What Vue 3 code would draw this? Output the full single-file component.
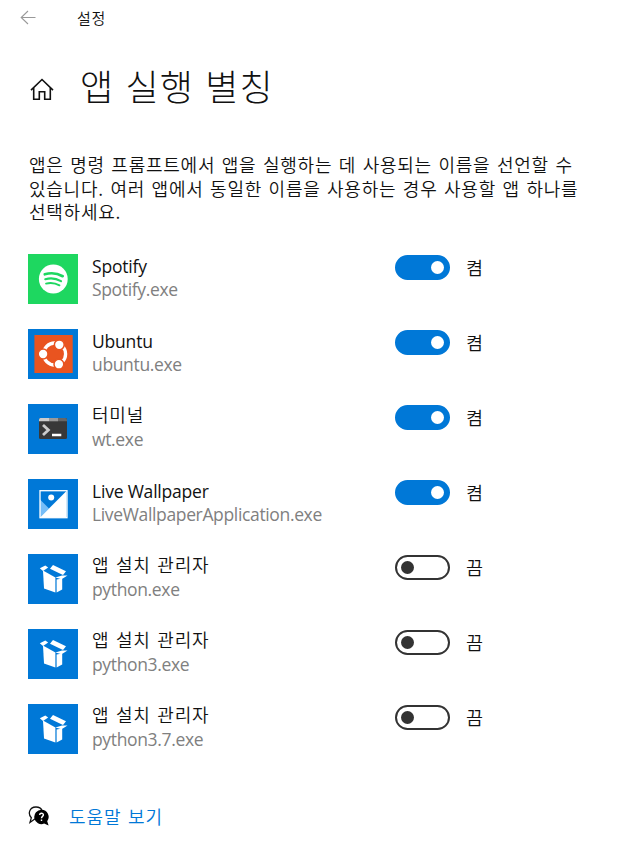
<template>
  <div class="settings">
    <header class="titlebar">
      <svg class="back" width="17" height="15" viewBox="0 0 17 15">
        <path d="M15.5 7.5H1.2M8 1L1.2 7.5L8 14" fill="none" stroke="#999" stroke-width="1.1" />
      </svg>
      <span class="titlebar-text">설정</span>
    </header>

    <div class="heading">
      <svg class="home" width="24" height="24" viewBox="0 0 24 24">
        <path
          d="M1 13.1L12 2.5L23 13.1M3.7 11V22.3H9.3V14.8H14.7V22.3H20.3V11"
          fill="none"
          stroke="#111"
          stroke-width="1.6"
        />
      </svg>
      <h1>앱 실행 별칭</h1>
    </div>

    <p class="description">
      앱은 명령 프롬프트에서 앱을 실행하는 데 사용되는 이름을 선언할 수<br />
      있습니다. 여러 앱에서 동일한 이름을 사용하는 경우 사용할 앱 하나를<br />
      선택하세요.
    </p>

    <ul class="apps">
      <li v-for="app in apps" :key="app.exe" class="app">
        <div class="tile" :class="app.icon">
          <svg v-if="app.icon === 'spotify'" width="50" height="50" viewBox="0 0 50 50">
            <circle cx="25.3" cy="25" r="14.4" fill="#fff" />
            <g fill="none" stroke="#1ed760" stroke-linecap="round">
              <path d="M16.8 20.3C22.3 18.7 29.3 19.2 34.7 22.2" stroke-width="2.7" />
              <path d="M17.3 25.2C22.3 23.8 28.3 24.4 33 27.1" stroke-width="2.2" />
              <path d="M18 29.6C22.3 28.5 27.3 29 31.5 31.4" stroke-width="1.8" />
            </g>
          </svg>
          <svg v-else-if="app.icon === 'ubuntu'" width="50" height="50" viewBox="0 0 50 50">
            <rect x="6.4" y="6" width="38.3" height="38" fill="#e95420" />
            <circle cx="26.6" cy="25" r="11" fill="none" stroke="#fff" stroke-width="3.3" />
            <g fill="#fff" stroke="#e95420" stroke-width="1.5">
              <circle cx="15.1" cy="25" r="4.9" />
              <circle cx="31.3" cy="15.8" r="4.9" />
              <circle cx="30.9" cy="35.2" r="4.9" />
            </g>
          </svg>
          <svg v-else-if="app.icon === 'terminal'" width="50" height="50" viewBox="0 0 50 50">
            <rect x="11" y="14" width="28" height="21" rx="1.5" fill="#383838" />
            <path d="M11 17.3V15.5Q11 14 12.5 14H21V17.3Z" fill="#ccc" />
            <path d="M21 14H30V17.3H21Z" fill="#999" />
            <path d="M30 14H37.5Q39 14 39 15.5V17.3H30Z" fill="#666" />
            <path d="M15 21L20.4 26L15 31" fill="none" stroke="#ccc" stroke-width="2.8" />
            <path d="M24 31H33.3" stroke="#fff" stroke-width="2.5" />
          </svg>
          <svg v-else-if="app.icon === 'wallpaper'" width="50" height="50" viewBox="0 0 50 50">
            <path d="M12 12H38.5L12 38.5Z" fill="#0078d7" />
            <path d="M12 20.5L21 29.5L12 38.5Z" fill="#76bdf8" />
            <path d="M38.5 12V38.5H12Z" fill="#fff" />
            <rect x="12" y="11.7" width="27" height="27" fill="none" stroke="#fff" stroke-width="1.3" />
            <circle cx="23.2" cy="18.5" r="3" fill="#fff" />
          </svg>
          <svg v-else width="50" height="50" viewBox="0 0 50 50">
            <g fill="#fff">
              <path d="M15 16.5L27.4 23.6V38.5L16 34.6Z" />
              <path d="M28.6 25.4L34.2 24.6V35.4L28.6 38.5Z" />
              <path d="M11.8 14.2L17.3 11.6L20.2 13.6L15 17Z" />
              <path d="M25 11L38 17.2L35 21L22 14.8Z" />
              <path d="M27.4 23.6L34 21.6L39.5 21.5L33.5 25.3Z" />
            </g>
          </svg>
        </div>
        <div class="names">
          <div class="name" :class="{ korean: app.korean }">{{ app.name }}</div>
          <div class="exe">{{ app.exe }}</div>
        </div>
        <button class="toggle" :class="{ on: app.on }" @click="app.on = !app.on">
          <span class="knob"></span>
        </button>
        <span class="state">{{ app.on ? '켬' : '끔' }}</span>
      </li>
    </ul>

    <footer class="help">
      <svg width="22" height="20" viewBox="0 0 22 20">
        <path
          d="M7.5 12.5L2 16.5L3.3 11.8C-.2 8.2 1 1.2 7.8 1C11 .9 13.2 2.5 14.2 4.8"
          fill="none"
          stroke="#111"
          stroke-width="1.3"
        />
        <path d="M13.6 3.7A7.2 7.2 0 0 1 19.2 15.2L20.6 19.5L16.1 17.6A7.2 7.2 0 1 1 13.6 3.7Z" fill="#000" />
        <path
          d="M11.6 9C11.7 6.7 15.5 6.8 15.4 8.9C15.3 10.4 13.5 10.4 13.5 12.2M13.5 13.4V14.9"
          fill="none"
          stroke="#fff"
          stroke-width="1.4"
        />
      </svg>
      <a>도움말 보기</a>
    </footer>
  </div>
</template>

<script setup>
import { ref } from 'vue'

const apps = ref([
  { name: 'Spotify', exe: 'Spotify.exe', icon: 'spotify', on: true },
  { name: 'Ubuntu', exe: 'ubuntu.exe', icon: 'ubuntu', on: true },
  { name: '터미널', exe: 'wt.exe', icon: 'terminal', on: true, korean: true },
  { name: 'Live Wallpaper', exe: 'LiveWallpaperApplication.exe', icon: 'wallpaper', on: true },
  { name: '앱 설치 관리자', exe: 'python.exe', icon: 'installer', on: false, korean: true },
  { name: '앱 설치 관리자', exe: 'python3.exe', icon: 'installer', on: false, korean: true },
  { name: '앱 설치 관리자', exe: 'python3.7.exe', icon: 'installer', on: false, korean: true }
])
</script>

<style>
body {
  background: #fff;
}
</style>

<style scoped>
.settings {
  box-sizing: border-box;
  height: 847px;
  overflow: hidden;
  color: #111;
  font-family: 'Noto Sans CJK KR', sans-serif;
  font-weight: 350;
}

.titlebar {
  display: flex;
  align-items: center;
  height: 35px;
  padding-left: 20px;
}

.titlebar-text {
  margin-left: 40px;
  font-size: 15px;
  letter-spacing: 0.8px;
}

.heading {
  display: flex;
  align-items: center;
  height: 60px;
  padding: 20px 0 0 30px;
}

.home {
  margin-top: 7px;
}

h1 {
  margin: 0 0 0 26px;
  font-size: 36px;
  font-weight: 300;
  line-height: 60px;
  letter-spacing: 1.2px;
  word-spacing: 2px;
  white-space: nowrap;
}

.description {
  margin: 38px 0 0 29px;
  font-size: 18px;
  line-height: 23.5px;
  letter-spacing: 0.75px;
  word-spacing: 1.8px;
  white-space: nowrap;
}

.apps {
  margin: 30px 0 0;
  padding: 0 0 0 28px;
  list-style: none;
}

.app {
  display: flex;
  height: 75px;
}

.tile {
  width: 50px;
  height: 50px;
  background: #0078d7;
}

.tile.spotify {
  background: #1ed760;
}

.tile svg {
  display: block;
}

.names {
  width: 303.4px;
  margin-left: 14px;
  font-family: 'Open Sans', 'Noto Sans CJK KR', sans-serif;
  font-size: 17.5px;
  font-weight: 400;
  white-space: nowrap;
}

.name {
  height: 23px;
  line-height: 25px;
  letter-spacing: -0.2px;
}

.name.korean {
  font-family: 'Noto Sans CJK KR', sans-serif;
  font-size: 18px;
  font-weight: 350;
  line-height: 21px;
  letter-spacing: 0.8px;
  word-spacing: 1.8px;
}

.exe {
  line-height: 24px;
  letter-spacing: -0.35px;
  color: #808080;
}

.toggle {
  display: flex;
  align-items: center;
  justify-content: flex-start;
  box-sizing: border-box;
  width: 55px;
  height: 25px;
  margin-top: 1px;
  padding: 0 4px;
  border: 2px solid #333;
  border-radius: 13px;
  background: #fff;
}

.toggle.on {
  justify-content: flex-end;
  border-color: #0078d7;
  background: #0078d7;
}

.knob {
  width: 13px;
  height: 13px;
  border-radius: 50%;
  background: #333;
}

.toggle.on .knob {
  background: #fff;
}

.state {
  margin-left: 15.6px;
  font-size: 18.5px;
  line-height: 26px;
}

.help {
  display: flex;
  align-items: center;
  height: 30px;
  margin-top: 22px;
  padding-left: 28px;
}

.help a {
  margin-left: 19px;
  color: #0078d7;
  font-size: 18px;
  letter-spacing: 0.9px;
  word-spacing: 1.8px;
}
</style>
